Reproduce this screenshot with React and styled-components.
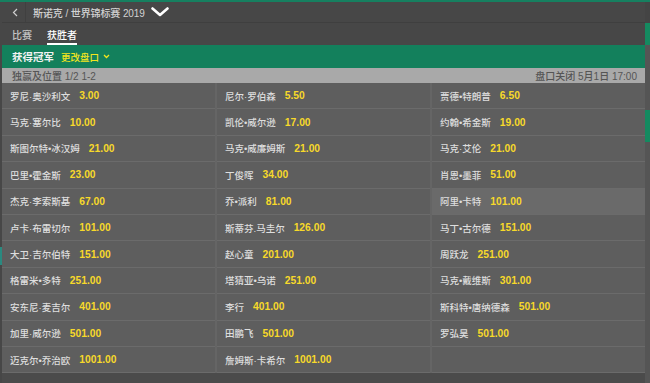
import React from "react";
import styled, { createGlobalStyle } from "styled-components";

const Global = createGlobalStyle`
  html, body { margin: 0; padding: 0; background: #4a4a4a; }
  body { font-family: "Liberation Sans", "Noto Sans CJK SC", sans-serif; }
  #root { width: 650px; height: 383px; }
`;

const Page = styled.div`
  width: 650px;
  height: 383px;
  display: flex;
  flex-direction: column;
  overflow: hidden;
  background: #4a4a4a;
`;

const TopLine = styled.div`
  height: 2px;
  background: #168060;
  flex: none;
`;

const Body = styled.div`
  flex: 1;
  display: flex;
  min-height: 0;
`;

const Rail = styled.div`
  flex: none;
  width: ${(p) => p.$w}px;
  display: flex;
  flex-direction: column;
  background: #474747;
`;

const RailSeg = styled.div`
  height: ${(p) => p.$h}px;
  flex: ${(p) => (p.$h ? "none" : "1")};
  background: ${(p) => p.$c};
`;

const Main = styled.div`
  flex: 1;
  display: flex;
  flex-direction: column;
  min-width: 0;
`;

const Header = styled.div`
  height: 20px;
  display: flex;
  align-items: center;
  background: #474747;
  border-bottom: 1px solid #3f3f3f;
  color: #d2d2d2;
  font-size: 10px;
  font-weight: 500;
`;

const Back = styled.div`
  width: 24px;
  height: 100%;
  display: flex;
  align-items: center;
  justify-content: center;
  border-right: 1px solid #404040;
  padding-left: 2px;
  box-sizing: border-box;
`;

const Crumb = styled.div`
  display: flex;
  align-items: center;
  gap: 6px;
  padding-left: 7px;
  letter-spacing: -0.1px;
`;

const Tabs = styled.div`
  height: 22px;
  display: flex;
  align-items: stretch;
  gap: 15px;
  padding-left: 10px;
  background: #474747;
`;

const Tab = styled.div`
  display: flex;
  align-items: center;
  font-size: 10px;
  font-weight: 500;
  color: ${(p) => (p.$active ? "#ffffff" : "#c4c4c4")};
  border-bottom: 2px solid ${(p) => (p.$active ? "#ffffff" : "transparent")};
  padding-top: 2px;
  box-sizing: border-box;
`;

const GreenBar = styled.div`
  height: 23px;
  display: flex;
  align-items: center;
  gap: 7px;
  padding-left: 10px;
  background: #13805c;
`;

const GreenTitle = styled.div`
  color: #f2f2f2;
  font-size: 10.5px;
  font-weight: bold;
`;

const ChangeLink = styled.div`
  display: flex;
  align-items: center;
  gap: 4px;
  color: #f2e51e;
  font-size: 9.5px;
  font-weight: 500;
`;

const GreyBar = styled.div`
  height: 15px;
  display: flex;
  align-items: center;
  justify-content: space-between;
  padding: 0 8px 0 10px;
  background: #a9a9a9;
  color: #555555;
  font-size: 10px;
  font-weight: 500;
`;

const Grid = styled.div`
  display: grid;
  grid-template-columns: repeat(3, 1fr);
  column-gap: 2px;
  background: #656565;
`;

const Cell = styled.div`
  height: 25.4px;
  display: flex;
  align-items: center;
  gap: 9px;
  padding-left: 8px;
  background: ${(p) => (p.$hover ? "#6a6a6a" : "#5e5e5e")};
  border-bottom: 1px solid #6b6b6b;
`;

const Name = styled.span`
  color: #dedede;
  font-size: 9.5px;
  font-weight: 500;
`;

const Odds = styled.span`
  color: #f7d92a;
  font-size: 10.3px;
  font-weight: bold;
`;

const Bottom = styled.div`
  flex: 1;
  background: #4b4b4b;
`;

const rows = [
  [["罗尼·奥沙利文", "3.00"], ["尼尔·罗伯森", "5.50"], ["贾德•特朗普", "6.50"]],
  [["马克·塞尔比", "10.00"], ["凯伦•威尔逊", "17.00"], ["约翰•希金斯", "19.00"]],
  [["斯图尔特•冰汉姆", "21.00"], ["马克•威廉姆斯", "21.00"], ["马克·艾伦", "21.00"]],
  [["巴里•霍金斯", "23.00"], ["丁俊晖", "34.00"], ["肖恩•墨菲", "51.00"]],
  [["杰克·李索斯基", "67.00"], ["乔•派利", "81.00"], ["阿里•卡特", "101.00", true]],
  [["卢卡·布雷切尔", "101.00"], ["斯蒂芬.马圭尔", "126.00"], ["马丁•古尔德", "151.00"]],
  [["大卫·吉尔伯特", "151.00"], ["赵心童", "201.00"], ["周跃龙", "251.00"]],
  [["格雷米•多特", "251.00"], ["塔猜亚•乌诺", "251.00"], ["马克•戴维斯", "301.00"]],
  [["安东尼·麦吉尔", "401.00"], ["李行", "401.00"], ["斯科特•唐纳德森", "501.00"]],
  [["加里·威尔逊", "501.00"], ["田鹏飞", "501.00"], ["罗弘昊", "501.00"]],
  [["迈克尔•乔治欧", "1001.00"], ["詹姆斯·卡希尔", "1001.00"], null],
];

const BackIcon = () => (
  <svg width="6" height="9" viewBox="0 0 6 9">
    <polyline points="5,1 1.5,4.5 5,8" fill="none" stroke="#cfcfcf" strokeWidth="1.2" />
  </svg>
);

const DownBig = () => (
  <svg width="18" height="10" viewBox="0 0 18 10">
    <polyline points="1.5,1.5 9,8 16.5,1.5" fill="none" stroke="#ffffff" strokeWidth="2.6" strokeLinecap="round" strokeLinejoin="round" />
  </svg>
);

const DownSmall = () => (
  <svg width="7" height="5" viewBox="0 0 7 5">
    <polyline points="1,1 3.5,3.5 6,1" fill="none" stroke="#f2e51e" strokeWidth="1.3" />
  </svg>
);

export default function App() {
  return (
    <>
      <Global />
      <Page>
        <TopLine />
        <Body>
          <Rail $w={2}>
            <RailSeg $h={245} $c="#474747" />
            <RailSeg $h={18} $c="#2a8a80" />
            <RailSeg $c="#474747" />
          </Rail>
          <Main>
            <Header>
              <Back>
                <BackIcon />
              </Back>
              <Crumb>
                <span>斯诺克 / 世界锦标赛 2019</span>
                <DownBig />
              </Crumb>
            </Header>
            <Tabs>
              <Tab>比赛</Tab>
              <Tab $active>获胜者</Tab>
            </Tabs>
            <GreenBar>
              <GreenTitle>获得冠军</GreenTitle>
              <ChangeLink>
                更改盘口
                <DownSmall />
              </ChangeLink>
            </GreenBar>
            <GreyBar>
              <span>独赢及位置 1/2 1-2</span>
              <span>盘口关闭 5月1日 17:00</span>
            </GreyBar>
            <Grid>
              {rows.flatMap((r, i) =>
                r.map((c, j) =>
                  c ? (
                    <Cell key={`${i}-${j}`} $hover={c[2]}>
                      <Name>{c[0]}</Name>
                      <Odds>{c[1]}</Odds>
                    </Cell>
                  ) : (
                    <Cell key={`${i}-${j}`} />
                  )
                )
              )}
            </Grid>
            <Bottom />
          </Main>
          <Rail $w={5}>
            <RailSeg $h={21} $c="#444444" />
            <RailSeg $h={22} $c="#148a60" />
            <RailSeg $h={65} $c="#555555" />
            <RailSeg $h={32} $c="#148a60" />
            <RailSeg $c="#555555" />
          </Rail>
        </Body>
      </Page>
    </>
  );
}
